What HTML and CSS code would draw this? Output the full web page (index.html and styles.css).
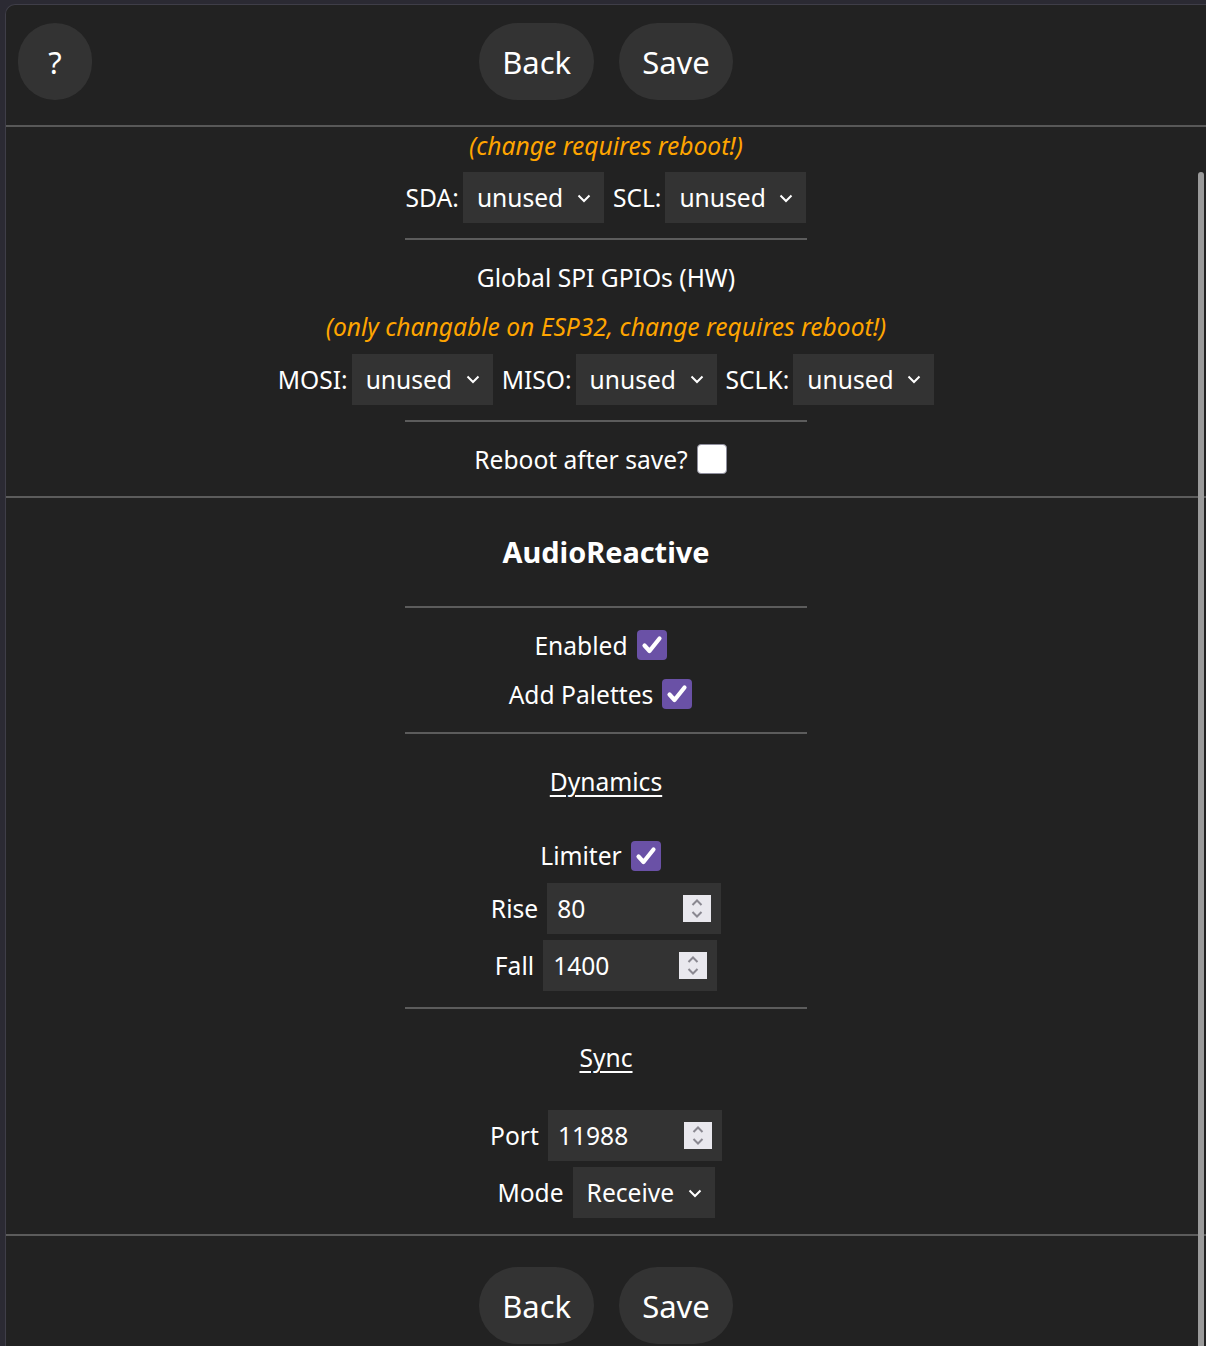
FILE: index.html
```html
<!DOCTYPE html>
<html>
<head>
<meta charset="utf-8">
<link rel="stylesheet" href="styles.css">
</head>
<body>
<div class="window">
  <div class="toprow">
    <button class="btn help">?</button>
    <div class="btns">
      <button class="btn">Back</button>
      <button class="btn">Save</button>
    </div>
  </div>

  <div class="content">
    <div class="line note first">(change requires reboot!)</div>
    <div class="row">
      <span class="lbl">SDA:</span>
      <span class="sel"><span>unused</span><svg class="chev" viewBox="0 0 14 9"><path d="M1.5 1.5 L7 7 L12.5 1.5"/></svg></span>
      <span class="lbl g">SCL:</span>
      <span class="sel"><span>unused</span><svg class="chev" viewBox="0 0 14 9"><path d="M1.5 1.5 L7 7 L12.5 1.5"/></svg></span>
    </div>
    <hr class="short">
    <div class="line">Global SPI GPIOs (HW)</div>
    <div class="line note">(only changable on ESP32, change requires reboot!)</div>
    <div class="row">
      <span class="lbl">MOSI:</span>
      <span class="sel"><span>unused</span><svg class="chev" viewBox="0 0 14 9"><path d="M1.5 1.5 L7 7 L12.5 1.5"/></svg></span>
      <span class="lbl g">MISO:</span>
      <span class="sel"><span>unused</span><svg class="chev" viewBox="0 0 14 9"><path d="M1.5 1.5 L7 7 L12.5 1.5"/></svg></span>
      <span class="lbl g">SCLK:</span>
      <span class="sel"><span>unused</span><svg class="chev" viewBox="0 0 14 9"><path d="M1.5 1.5 L7 7 L12.5 1.5"/></svg></span>
    </div>
    <hr class="short">
    <div class="line cbrow">Reboot after save?<span class="cb"></span></div>
    <hr class="full">

    <h3 class="title">AudioReactive</h3>
    <hr class="short">
    <div class="line cbrow">Enabled<span class="cb on"><svg viewBox="0 0 30 30"><path d="M7.5 15.5 L12.5 21 L22.5 8.5"/></svg></span></div>
    <div class="line cbrow">Add Palettes<span class="cb on"><svg viewBox="0 0 30 30"><path d="M7.5 15.5 L12.5 21 L22.5 8.5"/></svg></span></div>
    <hr class="short">
    <div class="sub"><u>Dynamics</u></div>
    <div class="line cbrow">Limiter<span class="cb on"><svg viewBox="0 0 30 30"><path d="M7.5 15.5 L12.5 21 L22.5 8.5"/></svg></span></div>
    <div class="row num">
      <span class="lbl">Rise</span>
      <span class="inp"><span>80</span><svg class="spin" viewBox="0 0 28 27"><path d="M9.5 10 L14 5.5 L18.5 10 M9.5 17 L14 21.5 L18.5 17"/></svg></span>
    </div>
    <div class="row num">
      <span class="lbl">Fall</span>
      <span class="inp"><span>1400</span><svg class="spin" viewBox="0 0 28 27"><path d="M9.5 10 L14 5.5 L18.5 10 M9.5 17 L14 21.5 L18.5 17"/></svg></span>
    </div>
    <hr class="short">
    <div class="sub"><u>Sync</u></div>
    <div class="row num">
      <span class="lbl">Port</span>
      <span class="inp"><span>11988</span><svg class="spin" viewBox="0 0 28 27"><path d="M9.5 10 L14 5.5 L18.5 10 M9.5 17 L14 21.5 L18.5 17"/></svg></span>
    </div>
    <div class="row num">
      <span class="lbl">Mode</span>
      <span class="sel mode"><span>Receive</span><svg class="chev" viewBox="0 0 14 9"><path d="M1.5 1.5 L7 7 L12.5 1.5"/></svg></span>
    </div>
    <hr class="full last">
  </div>

  <div class="bottomrow">
    <div class="btns">
      <button class="btn">Back</button>
      <button class="btn">Save</button>
    </div>
  </div>

  <div class="scrollbar"></div>
</div>
</body>
</html>
```

FILE: styles.css
```css
* { box-sizing: border-box; }
html, body { margin: 0; height: 100%; }
body {
  background: #2b2a33;
  font-family: "Noto Sans", "Open Sans", sans-serif;
  font-size: 24.6px;
  color: #fff;
  overflow: hidden;
  padding: 4px 0 0 5px;
}
.window {
  position: relative;
  background: #222;
  border-top: 1px solid #3f3e48;
  border-left: 1px solid #3f3e48;
  border-top-left-radius: 10px;
  height: 1342px;
  overflow: hidden;
  text-align: center;
}
.toprow {
  position: relative;
  height: 122px;
  border-bottom: 2px solid #585858;
}
.btns {
  display: flex;
  justify-content: center;
  gap: 25px;
  padding-top: 18px;
}
.btn {
  background: #333;
  color: #fff;
  border: 0;
  font-family: "Noto Sans", "Open Sans", sans-serif;
  font-size: 31px;
  height: 77px;
  min-width: 74px;
  padding: 2px 23px 0;
  border-radius: 39px;
  line-height: 75px;
}
.help {
  position: absolute;
  left: 12px;
  top: 18px;
  padding: 2px 0 0;
  width: 74px;
}
.line {
  line-height: 49px;
  height: 49px;
}
.first { margin-top: -6.5px; }
.note {
  color: #ffa500;
  font-style: italic;
}
.row {
  display: flex;
  justify-content: center;
  align-items: center;
  height: 56px;
}
.row.num { height: 57px; }
.lbl { margin-right: 4px; }
.lbl.g { margin-left: 9px; }
.num .lbl { margin-right: 9px; }
.sel {
  display: inline-flex;
  align-items: center;
  justify-content: space-between;
  width: 141px;
  height: 51px;
  background: #333;
  padding: 0 13px 0 14px;
}
.sel.mode { width: 142px; }
.chev {
  width: 14px;
  height: 9px;
  fill: none;
  stroke: #fff;
  stroke-width: 2;
  margin-top: 1px;
}
.inp {
  display: inline-flex;
  align-items: center;
  justify-content: space-between;
  width: 174px;
  height: 51px;
  background: #333;
  padding: 0 10px 0 10px;
}
.spin {
  width: 28px;
  height: 27px;
  background: #e9e8ee;
  fill: none;
  stroke: #8a8891;
  stroke-width: 2;
}
hr {
  border: 0;
  height: 2px;
  background: #5c5c5c;
  margin: 12.8px auto;
}
hr.short { width: 402px; }
hr.full { width: 100%; }
hr.last { margin-bottom: 0; }
.cbrow {
  display: flex;
  justify-content: center;
  align-items: center;
}
.cb {
  display: inline-block;
  width: 30px;
  height: 30px;
  margin-left: 9px;
  margin-right: 11px;
  border-radius: 4px;
  background: #fff;
  border: 1.5px solid #8f8f9d;
}
.cb.on {
  background: #6a51a6;
  border: 0;
}
.cb svg {
  display: block;
  width: 30px;
  height: 30px;
  fill: none;
  stroke: #fff;
  stroke-width: 4.2;
  stroke-linecap: round;
  stroke-linejoin: round;
}
.title {
  margin: 0;
  height: 82px;
  line-height: 82px;
  font-size: 28.9px;
  font-weight: bold;
}
.sub {
  height: 85px;
  padding-top: 11px;
  line-height: 49px;
}
.sub u { text-underline-offset: 4px; text-decoration-thickness: 2px; }
.bottomrow .btns { padding-top: 31px; }
.scrollbar {
  position: absolute;
  right: 2px;
  top: 167px;
  bottom: -10px;
  width: 6px;
  background: #9a9a9a;
  border-radius: 3px 3px 0 0;
}
```
